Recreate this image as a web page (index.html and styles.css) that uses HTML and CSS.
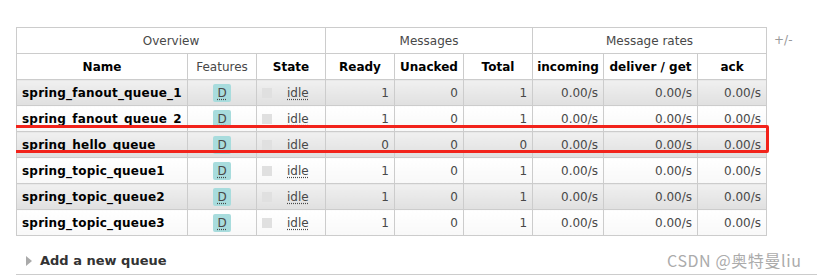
FILE: index.html
```html
<!DOCTYPE html>
<html>
<head>
<title>Queues</title>
<link rel="stylesheet" href="styles.css">
</head>
<body>

<div class="qwrap">
 <table class="list">
  <colgroup>
   <col class="c-name"><col class="c-feat"><col class="c-state">
   <col class="c-num"><col class="c-num"><col class="c-num">
   <col class="c-inc"><col class="c-del"><col class="c-ack">
  </colgroup>
  <thead>
   <tr class="grp">
    <th colspan="3">Overview</th>
    <th colspan="3">Messages</th>
    <th colspan="3">Message rates</th>
   </tr>
   <tr class="hdr">
    <th>Name</th>
    <th class="plain">Features</th>
    <th>State</th>
    <th>Ready</th>
    <th>Unacked</th>
    <th>Total</th>
    <th>incoming</th>
    <th>deliver / get</th>
    <th>ack</th>
   </tr>
  </thead>
  <tbody>
   <tr class="alt1">
    <td class="nm">spring_fanout_queue_1</td>
    <td class="ctr"><span class="feat">D</span></td>
    <td><div class="st"><span class="box"></span><span class="idle">idle</span></div></td>
    <td class="r">1</td><td class="r">0</td><td class="r">1</td>
    <td class="r">0.00/s</td><td class="r">0.00/s</td><td class="r">0.00/s</td>
   </tr>
   <tr class="alt2">
    <td class="nm">spring_fanout_queue_2</td>
    <td class="ctr"><span class="feat">D</span></td>
    <td><div class="st"><span class="box"></span><span class="idle">idle</span></div></td>
    <td class="r">1</td><td class="r">0</td><td class="r">1</td>
    <td class="r">0.00/s</td><td class="r">0.00/s</td><td class="r">0.00/s</td>
   </tr>
   <tr class="alt1">
    <td class="nm">spring_hello_queue</td>
    <td class="ctr"><span class="feat">D</span></td>
    <td><div class="st"><span class="box"></span><span class="idle">idle</span></div></td>
    <td class="r">0</td><td class="r">0</td><td class="r">0</td>
    <td class="r">0.00/s</td><td class="r">0.00/s</td><td class="r">0.00/s</td>
   </tr>
   <tr class="alt2">
    <td class="nm">spring_topic_queue1</td>
    <td class="ctr"><span class="feat">D</span></td>
    <td><div class="st"><span class="box"></span><span class="idle">idle</span></div></td>
    <td class="r">1</td><td class="r">0</td><td class="r">1</td>
    <td class="r">0.00/s</td><td class="r">0.00/s</td><td class="r">0.00/s</td>
   </tr>
   <tr class="alt1">
    <td class="nm">spring_topic_queue2</td>
    <td class="ctr"><span class="feat">D</span></td>
    <td><div class="st"><span class="box"></span><span class="idle">idle</span></div></td>
    <td class="r">1</td><td class="r">0</td><td class="r">1</td>
    <td class="r">0.00/s</td><td class="r">0.00/s</td><td class="r">0.00/s</td>
   </tr>
   <tr class="alt2">
    <td class="nm">spring_topic_queue3</td>
    <td class="ctr"><span class="feat">D</span></td>
    <td><div class="st"><span class="box"></span><span class="idle">idle</span></div></td>
    <td class="r">1</td><td class="r">0</td><td class="r">1</td>
    <td class="r">0.00/s</td><td class="r">0.00/s</td><td class="r">0.00/s</td>
   </tr>
  </tbody>
 </table>
 <span class="pm">+/-</span>
</div>

<div class="section">
 <h2><span class="tri"></span>Add a new queue</h2>
</div>

<div class="mark"></div>
<div class="wm">CSDN @奥特曼liu</div>

</body>
</html>
```

FILE: styles.css
```css
body {
	margin: 27px 0 0 16px;
	padding: 0;
	background: #fff;
	font-family: "DejaVu Sans", Verdana, sans-serif;
	font-size: 12px;
	color: #484848;
	position: relative;
}

.qwrap {
	display: flex;
	align-items: flex-start;
}

table.list {
	border-collapse: collapse;
	table-layout: fixed;
	width: 751px;
}

.c-name { width: 171px; }
.c-feat { width: 69px; }
.c-state { width: 69px; }
.c-num { width: 69px; }
.c-inc { width: 71px; }
.c-del { width: 94px; }
.c-ack { width: 69px; }

table.list th,
table.list td {
	border: 1px solid #ccc;
	height: 26px;
	padding: 0 5px;
	box-sizing: border-box;
	white-space: nowrap;
	overflow: hidden;
}

table.list th {
	background: #fff;
	font-weight: normal;
	color: #484848;
	text-align: center;
}

tr.hdr th {
	font-weight: bold;
	color: #000;
	padding: 0 3px;
}

tr.hdr th.plain {
	font-weight: normal;
	color: #484848;
}

tr.alt1 td {
	background: linear-gradient(#f0f0f0, #e0e0e0);
}

tr.alt2 td {
	background: linear-gradient(#fff, #f8f8f8);
}

td.nm {
	font-weight: bold;
	color: #000;
	padding-left: 5px;
	letter-spacing: 0.2px;
}

td.ctr { text-align: center; }
td.r { text-align: right; padding-right: 4px; }

.feat {
	display: inline-block;
	width: 18px;
	height: 18px;
	line-height: 18px;
	border-radius: 2px;
	background: #a8dcdd;
	color: #484848;
	text-align: center;
	text-decoration: underline dotted;
	text-underline-offset: 2px;
	vertical-align: middle;
}

.st {
	display: flex;
	align-items: center;
	gap: 15px;
}

.box {
	width: 10px;
	height: 10px;
	background: #e0e0e0;
}

.idle {
	text-decoration: underline dotted;
	text-underline-offset: 2px;
}

.pm {
	margin: 6px 0 0 7px;
	color: #999;
	font-size: 12px;
}

.section {
	border-bottom: 1px solid #ccc;
	padding: 16px 0 5px 10px;
}

.section h2 {
	margin: 0;
	font-size: 13px;
	font-weight: bold;
	color: #333;
	display: flex;
	align-items: center;
	gap: 8px;
	line-height: 17px;
}

.tri {
	width: 0;
	height: 0;
	border-top: 5px solid transparent;
	border-bottom: 5px solid transparent;
	border-left: 6px solid #aaa;
}

.mark {
	position: absolute;
	left: -7px;
	top: 98px;
	width: 754px;
	height: 22px;
	border: 3px solid #f2231b;
	border-radius: 2px;
}

.wm {
	position: absolute;
	left: 651px;
	top: 221px;
	font-family: "Noto Sans CJK SC", "DejaVu Sans", sans-serif;
	font-size: 16px;
	letter-spacing: 0.6px;
	color: #ababab;
}
```
